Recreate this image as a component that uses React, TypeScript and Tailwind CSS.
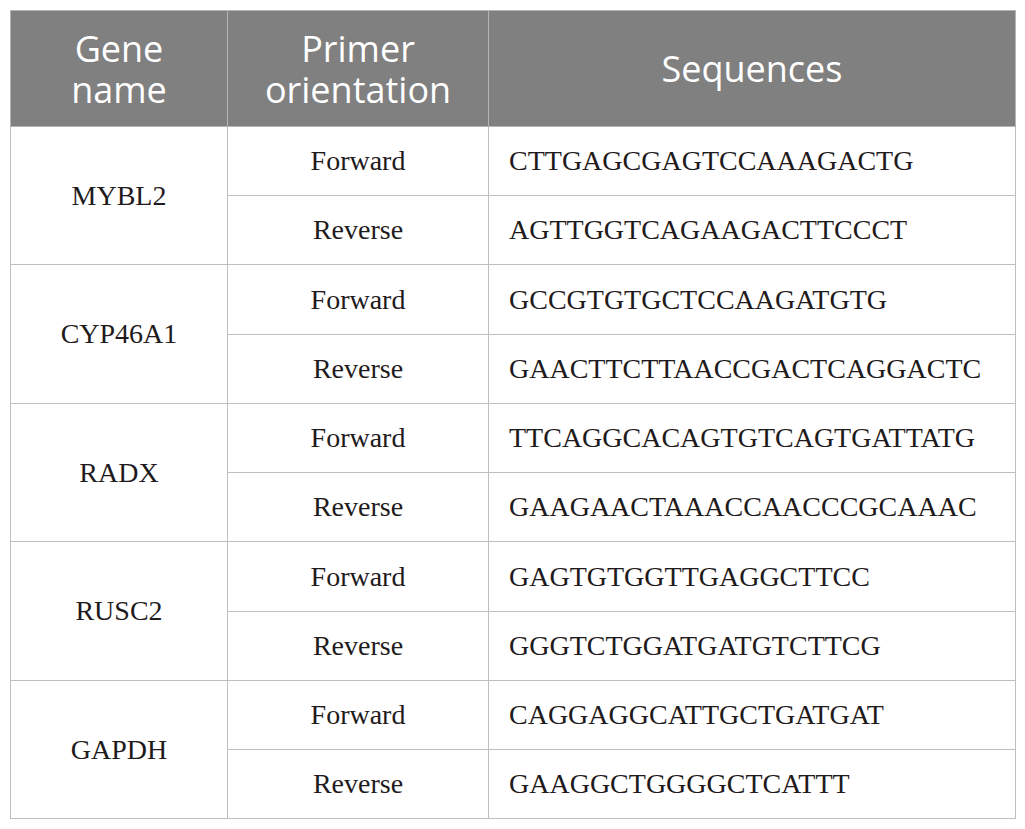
const rows = [
  { gene: 'MYBL2', fwd: 'CTTGAGCGAGTCCAAAGACTG', rev: 'AGTTGGTCAGAAGACTTCCCT' },
  { gene: 'CYP46A1', fwd: 'GCCGTGTGCTCCAAGATGTG', rev: 'GAACTTCTTAACCGACTCAGGACTC' },
  { gene: 'RADX', fwd: 'TTCAGGCACAGTGTCAGTGATTATG', rev: 'GAAGAACTAAACCAACCCGCAAAC' },
  { gene: 'RUSC2', fwd: 'GAGTGTGGTTGAGGCTTCC', rev: 'GGGTCTGGATGATGTCTTCG' },
  { gene: 'GAPDH', fwd: 'CAGGAGGCATTGCTGATGAT', rev: 'GAAGGCTGGGGCTCATTT' },
];

export default function App() {
  return (
    <div className="w-[1025px] h-[829px] bg-white pt-[10px] pl-[10px]">
      <table className="w-[1005px] table-fixed border-collapse text-[#1f1b1c] font-['Liberation_Serif',serif] text-[28px]">
        <colgroup>
          <col className="w-[217px]" />
          <col className="w-[261px]" />
          <col className="w-[527px]" />
        </colgroup>
        <thead>
          <tr className="h-[116px] bg-[#808080] text-white font-['Open_Sans',sans-serif] text-[36px] leading-[41px]">
            <th className="border border-[#b4b4b4] font-normal text-center">
              <span className="block h-[41px] overflow-visible">Gene</span>
              <span className="block h-[41px] overflow-visible">name</span>
            </th>
            <th className="border border-[#b4b4b4] font-normal text-center">
              <span className="block h-[41px] overflow-visible">Primer</span>
              <span className="block h-[41px] overflow-visible">orientation</span>
            </th>
            <th className="border border-[#b4b4b4] font-normal text-center">Sequences</th>
          </tr>
        </thead>
        <tbody>
          {rows.map((r, i) => (
            <>
              <tr key={r.gene + 'f'} className={i % 2 === 0 ? 'h-[69px]' : 'h-[70px]'}>
                <td rowSpan={2} className="border border-[#bfbfbf] text-center align-middle">
                  {r.gene}
                </td>
                <td className="border border-[#bfbfbf] text-center">Forward</td>
                <td className="border border-[#bfbfbf] pl-[20px]">{r.fwd}</td>
              </tr>
              <tr key={r.gene + 'r'} className="h-[69px]">
                <td className="border border-[#bfbfbf] text-center">Reverse</td>
                <td className="border border-[#bfbfbf] pl-[20px]">{r.rev}</td>
              </tr>
            </>
          ))}
        </tbody>
      </table>
    </div>
  );
}
